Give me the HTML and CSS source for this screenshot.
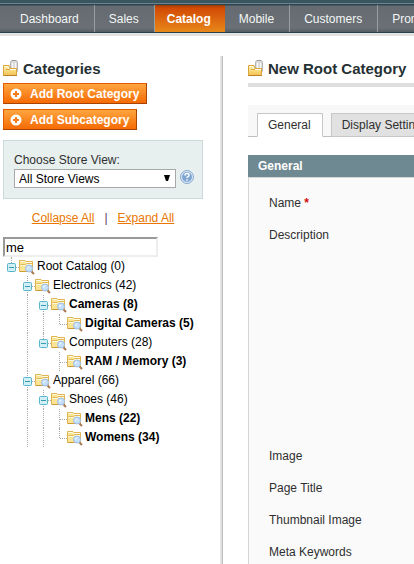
FILE: index.html
```html
<!DOCTYPE html>
<html lang="en">
<head>
<meta charset="utf-8">
<meta name="viewport" content="width=device-width, initial-scale=1">
<title>Categories</title>
<link rel="stylesheet" href="styles.css">
</head>
<body>
<svg class="defs" aria-hidden="true">
  <defs>
    <linearGradient id="gold" x1="0" y1="0" x2="0" y2="1">
      <stop offset="0" stop-color="#fff3b8"/><stop offset="1" stop-color="#f3c24c"/>
    </linearGradient>
    <symbol id="category" viewBox="0 0 16 16">
      <rect x="7.500" y=".5" width="7" height="12" rx="2" fill="#dcdcdc" stroke="#b4b4b4"/>
      <path d="M9.500 3v8M12.500 3v8" stroke="#fafafa"/>
      <path d="M9 .5h4" stroke="#999" fill="none"/>
      <path d="M.5 15.500V5.500H6l1 3h6.500v7z" fill="url(#gold)" stroke="#dba637"/>
      <path d="M1.500 6.500H5l1 3h7" stroke="#fffce8" fill="none"/>
      <path d="M3 9.500h4" stroke="#e0a83a"/>
      <path d="M.5 15.500h13.500" stroke="#b9802a"/>
    </symbol>
    <symbol id="folder" viewBox="0 0 16 16">
      <path d="M.5 12.500V1.500H6l1 1h6.500v10z" fill="#fbe493" stroke="#dfb452"/>
      <path d="M1.500 5.500h5l1-1H13" stroke="#e2b857" fill="none"/>
      <path d="M1.500 2.500h4l1 1H13M1.500 6.500H7l1-1h5" stroke="#fffbe3" fill="none"/>
      <path d="M1 12.500h9" stroke="#cf9a3a"/>
      <path d="M12.500 12.500l2.500 2.500" stroke="#a87850" stroke-width="2"/>
      <circle cx="10" cy="9.500" r="3.500" fill="#c6e0fa" stroke="#9dbde6"/>
      <path d="M8.500 9.500q0-1.500 1.500-1.500" stroke="#fff" fill="none"/>
    </symbol>
    <symbol id="minus" viewBox="0 0 9 9">
      <rect x=".5" y=".5" width="8" height="8" rx="1" fill="#d2eff5" stroke="#58b6cc"/>
      <path d="M2 4.500h5" stroke="#3a9ab4"/>
    </symbol>
    <symbol id="plus" viewBox="0 0 12 12">
      <circle cx="6" cy="6" r="5.500" fill="#fff"/>
      <path d="M6 3v6M3 6h6" stroke="#f47a1c" stroke-width="2"/>
    </symbol>
  </defs>
</svg>

<header class="header">
  <nav class="nav">
    <a href="#">Dashboard</a>
    <a href="#">Sales</a>
    <a href="#" class="active">Catalog</a>
    <a href="#">Mobile</a>
    <a href="#">Customers</a>
    <a href="#">Promotions</a>
  </nav>
</header>

<div class="columns">
  <aside class="sidebar">
    <h1 class="title"><svg class="icon"><use href="#category"/></svg>Categories</h1>
    <div class="actions">
      <button type="button"><svg><use href="#plus"/></svg>Add Root Category</button>
      <button type="button"><svg><use href="#plus"/></svg>Add Subcategory</button>
    </div>
    <div class="switcher">
      <label for="store">Choose Store View:</label>
      <div class="switcher-row">
        <span class="select">
          <select id="store"><option>All Store Views</option></select>
          <svg viewBox="0 0 6 6"><path d="M0 0h6L4 6H2z"/></svg>
        </span>
        <a href="#" class="help" aria-label="Help"><svg viewBox="0 0 14 14">
          <circle cx="7" cy="7" r="6.500" fill="#dce8f4" stroke="#87a9cd"/>
          <circle cx="7" cy="7" r="5" fill="#7fa6d2"/>
          <path d="M5 5.500q0-2 2-2t2 1.700q0 1-1 1.400-1 .4-1 1.400M7 9.300v1.500" fill="none" stroke="#fff" stroke-width="1.500"/>
        </svg></a>
      </div>
    </div>
    <div class="tree-links"><a href="#">Collapse All</a><span>|</span><a href="#">Expand All</a></div>
    <input class="search" type="text" value="me" aria-label="Filter categories">
    <ul class="tree">
      <li><i class="end node"><svg><use href="#minus"/></svg></i><svg class="icon"><use href="#folder"/></svg><span>Root Catalog (0)</span></li>
      <li><i></i><i class="tee node"><svg><use href="#minus"/></svg></i><svg class="icon"><use href="#folder"/></svg><span>Electronics (42)</span></li>
      <li><i></i><i class="line"></i><i class="tee node"><svg><use href="#minus"/></svg></i><svg class="icon"><use href="#folder"/></svg><span class="match">Cameras (8)</span></li>
      <li><i></i><i class="line"></i><i class="line"></i><i class="end"></i><svg class="icon"><use href="#folder"/></svg><span class="match">Digital Cameras (5)</span></li>
      <li><i></i><i class="line"></i><i class="end node"><svg><use href="#minus"/></svg></i><svg class="icon"><use href="#folder"/></svg><span>Computers (28)</span></li>
      <li><i></i><i class="line"></i><i></i><i class="tee"></i><svg class="icon"><use href="#folder"/></svg><span class="match">RAM / Memory (3)</span></li>
      <li><i></i><i class="tee node"><svg><use href="#minus"/></svg></i><svg class="icon"><use href="#folder"/></svg><span>Apparel (66)</span></li>
      <li><i></i><i class="line"></i><i class="tee node"><svg><use href="#minus"/></svg></i><svg class="icon"><use href="#folder"/></svg><span>Shoes (46)</span></li>
      <li><i></i><i class="line"></i><i class="line"></i><i class="tee"></i><svg class="icon"><use href="#folder"/></svg><span class="match">Mens (22)</span></li>
      <li><i></i><i class="line"></i><i class="line"></i><i class="end"></i><svg class="icon"><use href="#folder"/></svg><span class="match">Womens (34)</span></li>
    </ul>
  </aside>

  <main class="main">
    <h2 class="title"><svg class="icon"><use href="#category"/></svg>New Root Category</h2>
    <div class="tabs">
      <a href="#" class="active">General</a>
      <a href="#">Display Settings</a>
    </div>
    <h3 class="legend">General</h3>
    <div class="fields">
      <p>Name <em>*</em></p>
      <p class="tall">Description</p>
      <p>Image</p>
      <p>Page Title</p>
      <p>Thumbnail Image</p>
      <p>Meta Keywords</p>
    </div>
  </main>
</div>
</body>
</html>
```
FILE: styles.css
```css
* { box-sizing: border-box; }

body {
  display: flex;
  flex-direction: column;
  min-height: 100vh;
  margin: 0;
  overflow: hidden;
  background: #fff;
  color: #2f2f2f;
  font: 12px/16px "Liberation Sans", Arial, sans-serif;
}

svg { display: block; flex: none; }
.defs { position: absolute; width: 0; height: 0; }
.icon { width: 16px; height: 16px; }

.header {
  padding-top: 3px;
  background: #3b5560;
  border-bottom: 3px solid #e2e2e2;
}

.nav {
  display: flex;
  height: 30px;
  padding-left: 6px;
  overflow: hidden;
  border-top: 1px solid #6f858d;
  border-bottom: 1px solid #28414c;
  background: linear-gradient(#2b444f 1px, #656b70 2px, #6a7075 24px, #555e63);
}

.nav a {
  flex: none;
  margin-top: 1px;
  padding: 6px 15px 0 14px;
  border-right: 1px solid #989da0;
  color: #f4f6f6;
  text-decoration: none;
}

.nav .active {
  padding: 6px 14px 0 12px;
  border-right: 0;
  background: linear-gradient(#9c3b08, #d24a05 3px, #e8881a);
  color: #fff;
  font-weight: bold;
}

.columns { display: flex; flex: 1; }

.sidebar {
  flex: none;
  width: 223px;
  margin-top: 20px;
  padding: 4px 19px 0 3px;
  border-right: 1px solid #bdbdbd;
  box-shadow: inset -2px 0 #e2e2e2;
}

.title {
  display: flex;
  gap: 4px;
  margin: 0;
  color: #253033;
  font-size: 15px;
  line-height: 18px;
}

.actions {
  display: flex;
  flex-direction: column;
  align-items: flex-start;
  gap: 5px;
  margin-top: 5px;
}

.actions button {
  display: flex;
  align-items: center;
  gap: 8px;
  height: 21px;
  padding: 0 7px 0 6px;
  border: 1px solid #e05a00;
  border-right-color: #a84300;
  border-bottom-color: #a84300;
  background: linear-gradient(#ffa53f, #f56b05);
  color: #fff;
  font: bold 12px/16px "Liberation Sans", Arial, sans-serif;
}

.actions svg { width: 12px; height: 12px; }

.switcher {
  margin-top: 10px;
  padding: 11px 8px 10px 10px;
  border: 1px solid #cbdada;
  background: #e7efef;
}

.switcher label { display: block; }
.switcher-row { display: flex; gap: 4px; align-items: center; margin-top: 1px; }
.select { position: relative; flex: 1; }

.select select {
  display: block;
  width: 100%;
  height: 19px;
  padding: 0 4px;
  border: 1px solid #a8a8a8;
  border-radius: 0;
  appearance: none;
  background: #fff;
  color: #000;
  font: inherit;
}

.select svg { position: absolute; top: 6px; right: 6px; width: 6px; height: 6px; }
.help svg { width: 14px; height: 14px; margin-top: -3px; }

.tree-links {
  display: flex;
  justify-content: center;
  gap: 10px;
  margin-top: 11px;
  color: #5b3560;
}

.tree-links a { color: #ea7601; }

.search {
  display: block;
  width: 155px;
  height: 20px;
  margin-top: 11px;
  padding: 0 1px;
  border: 2px solid;
  border-color: #999 #eee #eee #999;
  color: #000;
  font: 13px/16px "Liberation Sans", Arial, sans-serif;
}

.tree { margin: 0; padding: 0; list-style: none; color: #000; }
.tree li { display: flex; align-items: center; height: 19px; white-space: nowrap; }
.tree li > span { margin: 0 0 2px 2px; }
.tree .match { font-weight: bold; }

.tree i {
  position: relative;
  flex: none;
  align-self: stretch;
  width: 16px;
}

.tree i::before,
.tree i::after { position: absolute; content: ""; }

.line::before,
.tee::before,
.end::before {
  top: 0;
  bottom: 0;
  left: 8px;
  border-left: 1px dotted #aaa;
}

.tree .end::before { bottom: 9px; }

.tee::after,
.end::after {
  top: 10px;
  left: 9px;
  right: 0;
  border-top: 1px dotted #aaa;
}

.node svg { position: absolute; z-index: 1; top: 6px; left: 4px; width: 9px; height: 9px; }

.main { flex: 1; min-width: 0; margin-left: 25px; padding-top: 24px; }

.main .title { padding-bottom: 5px; border-bottom: 4px solid #dfdfdf; white-space: nowrap; }

.tabs {
  display: flex;
  gap: 8px;
  height: 32px;
  margin-top: 18px;
  padding: 8px 0 0 9px;
  overflow: hidden;
  background: #f8f8f8;
  box-shadow: inset 0 -1px #bebebe;
}

.tabs a {
  flex: none;
  padding: 3px 11px 0 10px;
  border: 1px solid #c4c8c8;
  background: #e1e1e1;
  color: #2f2f2f;
  text-decoration: none;
}

.tabs .active { border-bottom-color: #fff; background: #fff; }

.legend {
  margin: 18px 0 0;
  padding: 3px 10px;
  background: #6f8992;
  color: #fff;
  font-size: 12px;
  line-height: 16px;
}

.fields {
  min-height: 388px;
  padding: 17px 20px 0;
  border: 1px solid #d6d6d6;
  border-right: 0;
  background: #fafafa;
}

.fields p { height: 32px; margin: 0; }
.fields .tall { height: 221px; }
.fields em { color: #d40707; font-style: normal; font-weight: bold; }
```
